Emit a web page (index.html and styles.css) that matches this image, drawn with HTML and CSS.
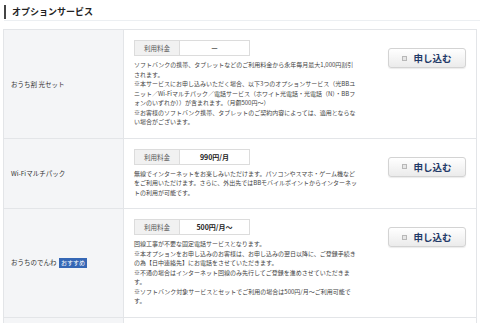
FILE: index.html
```html
<!DOCTYPE html>
<html lang="ja">
<head>
    <meta charset="UTF-8">
    <meta name="viewport" content="width=device-width, initial-scale=1.0">
    <title>オプションサービス</title>
    <link rel="stylesheet" href="styles.css">
</head>
<body>
    <h2 class="section-title">オプションサービス</h2>

    <table class="options">
        <tr>
            <th>おうち割 光セット</th>
            <td>
                <div class="option-body">
                    <div class="detail">
                        <div class="price">
                            <span class="price-label">利用料金</span>
                            <span class="price-value none">ー</span>
                        </div>
                        <p class="desc">
                            ソフトバンクの携帯、タブレットなどのご利用料金から永年毎月最大1,000円割引<br>されます。<br>
                            ※本サービスにお申し込みいただく場合、以下3つのオプションサービス（光BBユ<br>ニット／Wi-Fiマルチパック／電話サービス（ホワイト光電話・光電話（N）・BBフ<br>ォンのいずれか））が含まれます。（月額500円～）<br>
                            ※お客様のソフトバンク携帯、タブレットのご契約内容によっては、適用とならな<br>い場合がございます。
                        </p>
                    </div>
                    <button class="apply-button"><span class="check"></span>申し込む</button>
                </div>
            </td>
        </tr>
        <tr>
            <th>Wi-Fiマルチパック</th>
            <td>
                <div class="option-body">
                    <div class="detail">
                        <div class="price">
                            <span class="price-label">利用料金</span>
                            <span class="price-value">990円/月</span>
                        </div>
                        <p class="desc">
                            無線でインターネットをお楽しみいただけます。パソコンやスマホ・ゲーム機など<br>をご利用いただけます。さらに、外出先ではBBモバイルポイントからインターネッ<br>トの利用が可能です。
                        </p>
                    </div>
                    <button class="apply-button"><span class="check"></span>申し込む</button>
                </div>
            </td>
        </tr>
        <tr>
            <th>おうちのでんわ <span class="badge">おすすめ</span></th>
            <td>
                <div class="option-body">
                    <div class="detail">
                        <div class="price">
                            <span class="price-label">利用料金</span>
                            <span class="price-value">500円/月～</span>
                        </div>
                        <p class="desc">
                            回線工事が不要な固定電話サービスとなります。<br>
                            ※本オプションをお申し込みのお客様は、お申し込みの翌日以降に、ご登録手続き<br>の為【日中連絡先】にお電話をさせていただきます。<br>
                            ※不通の場合はインターネット回線のみ先行してご登録を進めさせていただきま<br>す。<br>
                            ※ソフトバンク対象サービスとセットでご利用の場合は500円/月～ご利用可能で<br>す。
                        </p>
                    </div>
                    <button class="apply-button"><span class="check"></span>申し込む</button>
                </div>
            </td>
        </tr>
        <tr class="next">
            <th></th>
            <td></td>
        </tr>
    </table>
</body>
</html>
```

FILE: styles.css
```css
* {
    margin: 0;
    padding: 0;
    box-sizing: border-box;
}

body {
    font-family: "Noto Sans CJK JP", "Noto Sans", sans-serif;
    background: #fff;
    color: #333;
    padding: 5px 3px 0 3px;
}

.section-title {
    font-size: 9px;
    font-weight: bold;
    color: #222;
    line-height: 14px;
    padding-left: 6px;
    border-left: 2px solid #444;
    margin-left: 1px;
    margin-right: -3px;
    position: relative;
}

.section-title::after {
    content: "";
    display: block;
    position: absolute;
    left: -2px;
    right: 0;
    bottom: -2px;
    border-bottom: 1px solid #eceff2;
}

.options {
    width: 474px;
    margin-top: 10px;
    border-collapse: collapse;
}

.options th,
.options td {
    border: 1px solid #e3e5e8;
    vertical-align: middle;
}

.options th {
    width: 120px;
    background: #f4f5f7;
    font-weight: normal;
    font-size: 6.5px;
    color: #333;
    text-align: left;
    padding-left: 7px;
}

.option-body {
    display: flex;
    align-items: flex-start;
    padding: 10px 10px 11px 10px;
}

.detail {
    width: 232px;
}

.price {
    display: flex;
    width: 116px;
    height: 16px;
    border: 1px solid #dcdcdc;
    margin-bottom: 4px;
}

.price-label {
    width: 45px;
    background: #f1f1f1;
    border-right: 1px solid #dcdcdc;
    font-size: 6.5px;
    color: #555;
    text-align: center;
    line-height: 14px;
}

.price-value {
    flex: 1;
    font-size: 7px;
    font-weight: bold;
    color: #222;
    text-align: center;
    line-height: 14px;
}

.price-value.none {
    font-weight: normal;
    color: #555;
}

.desc {
    font-size: 6px;
    line-height: 9.5px;
    color: #444;
    white-space: nowrap;
}

.apply-button {
    margin-left: auto;
    margin-top: 8px;
    width: 78px;
    height: 20px;
    display: flex;
    align-items: center;
    justify-content: center;
    gap: 6px;
    font-family: inherit;
    font-size: 9.5px;
    font-weight: bold;
    color: #1f3a68;
    background: linear-gradient(#ffffff, #ebebeb);
    border: 1px solid #d3d3d3;
    border-radius: 3px;
    box-shadow: 0 1px 1px rgba(0, 0, 0, 0.08);
    cursor: pointer;
}

.check {
    width: 5px;
    height: 5px;
    background: #e6e6e6;
    border: 1px solid #b8b8b8;
}

.badge {
    display: inline-block;
    background: #3567b5;
    color: #fff;
    font-size: 6px;
    line-height: 10px;
    padding: 0 2px;
    margin-left: 1px;
}

.next th,
.next td {
    height: 10px;
}
```
